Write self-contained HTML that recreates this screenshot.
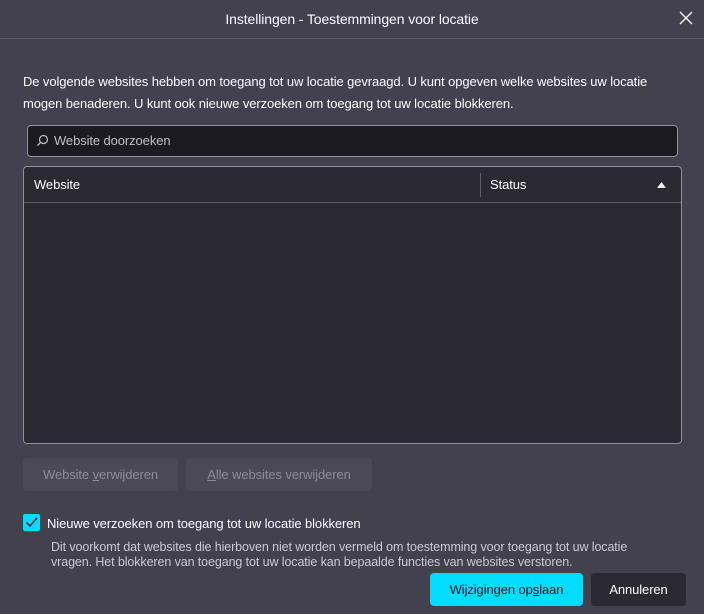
<!DOCTYPE html>
<html><head><meta charset="utf-8"><style>
*{box-sizing:border-box;margin:0;padding:0}
body{width:704px;height:614px;background:#42414d;font-family:"Liberation Sans",sans-serif;color:#fbfbfe;font-size:13px;position:relative;overflow:hidden;letter-spacing:-0.1px}
.abs{position:absolute}
.title{top:0;left:0;width:704px;height:39px;border-bottom:1px solid #5e5d69;text-align:center;line-height:39px;font-size:14px}
.close{right:10px;top:10px;width:16px;height:16px}
.p{left:23px;top:71px;line-height:22px;width:640px}
.search{left:27px;top:125px;width:651px;height:32px;background:#1c1b22;border:1px solid #8f8f9d;border-radius:4px;color:#bfbfc9;line-height:30px;padding-left:26px}
.table{left:23px;top:166px;width:659px;height:278px;background:#2b2a33;border:1px solid #8f8f9d;border-radius:4px}
.hdr{left:0;top:0;width:657px;height:36px;border-bottom:1px solid #5e5d69;line-height:36px}
.btn{height:33px;border-radius:4px;line-height:33px;text-align:center}
.dis{background:#4a4955;color:#8d8c96}
</style></head><body>
<div class="abs title">Instellingen - Toestemmingen voor locatie</div>
<svg class="abs close" viewBox="0 0 16 16"><path d="M2 2L14 14M14 2L2 14" stroke="#fbfbfe" stroke-width="1.3"/></svg>
<div class="abs p">De volgende websites hebben om toegang tot uw locatie gevraagd. U kunt opgeven welke websites uw locatie mogen benaderen. U kunt ook nieuwe verzoeken om toegang tot uw locatie blokkeren.</div>
<div class="abs search">Website doorzoeken</div>
<svg class="abs" style="left:36px;top:134px" width="13" height="13" viewBox="0 0 13 13"><circle cx="7.5" cy="5.5" r="4" fill="none" stroke="#bfbfc9" stroke-width="1.2"/><path d="M4.6 8.4L1.5 11.5" stroke="#bfbfc9" stroke-width="1.3"/></svg>
<div class="abs table">
 <div class="abs hdr"><span class="abs" style="left:10px">Website</span><div class="abs" style="left:456px;top:6px;width:1px;height:24px;background:#5e5d69"></div><span class="abs" style="left:466px">Status</span>
 <svg class="abs" style="left:633px;top:15px" width="9" height="6"><path d="M0 6L4.5 0L9 6Z" fill="#fbfbfe"/></svg></div>
</div>
<div class="abs btn dis" style="left:23px;top:458px;width:155px">Website <u>v</u>erwijderen</div>
<div class="abs btn dis" style="left:186px;top:458px;width:186px"><u>A</u>lle websites verwijderen</div>
<div class="abs" style="left:23px;top:514px;width:17px;height:17px;background:#00ddff;border-radius:2px"></div>
<svg class="abs" style="left:23px;top:514px" width="17" height="17"><path d="M3.5 8.5L7 12L14 4" stroke="#2b2a33" stroke-width="1.6" fill="none"/></svg>
<div class="abs" style="left:47px;top:515px;line-height:17px">Nieuwe verzoeken om toegang tot uw locatie blokkeren</div>
<div class="abs" style="left:51px;top:540px;width:600px;line-height:15px;color:#c9c9d1;font-size:12.5px">Dit voorkomt dat websites die hierboven niet worden vermeld om toestemming voor toegang tot uw locatie vragen. Het blokkeren van toegang tot uw locatie kan bepaalde functies van websites verstoren.</div>
<div class="abs btn" style="left:430px;top:573px;width:153px;background:#00ddff;color:#15141a">Wijzigingen op<u>s</u>laan</div>
<div class="abs btn" style="left:591px;top:573px;width:95px;background:#2b2a33">Annuleren</div>
</body></html>
